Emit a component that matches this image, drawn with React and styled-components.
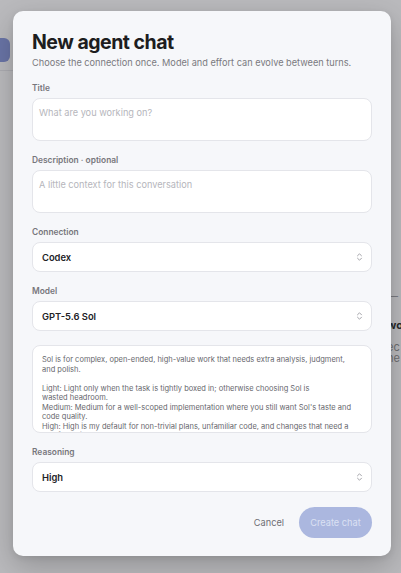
import React from "react";
import styled, { createGlobalStyle } from "styled-components";

const Global = createGlobalStyle`
  html, body { margin: 0; padding: 0; }
  body {
    width: 401px; height: 573px; overflow: hidden;
    font-family: Inter, "Noto Sans", sans-serif;
    background: #f3f3f5;
    -webkit-font-smoothing: antialiased;
  }
  * { box-sizing: border-box; }
`;

const Page = styled.div`
  position: relative;
  width: 401px;
  height: 573px;
  overflow: hidden;
  display: flex;
  background: #f6f6f8;
`;

const SideRail = styled.div`
  width: 40px;
  padding-top: 38px;
  border-bottom: 1px solid #e2e2e6;
  height: 71px;
`;

const RailPill = styled.div`
  width: 30px;
  height: 24px;
  margin-left: -20px;
  border-radius: 6px;
  background: #7f8fd6;
`;

const MainArea = styled.div`
  flex: 1;
  display: flex;
  flex-direction: column;
  align-items: flex-end;
  padding-top: 291px;
`;

const Peek = styled.div`
  width: 14px;
  font-size: 11px;
  line-height: 11px;
  color: ${(p) => p.$color};
  font-weight: ${(p) => p.$weight || 400};
  white-space: nowrap;
  overflow: hidden;
  margin-top: ${(p) => p.$mt || 0}px;
`;

const Overlay = styled.div`
  position: absolute;
  inset: 0;
  background: rgba(60, 60, 64, 0.32);
  display: flex;
  padding: 11px 10px 17px 13px;
`;

const Modal = styled.div`
  width: 378px;
  height: 545px;
  background: #f6f7fa;
  border-radius: 10px;
  box-shadow: 0 10px 30px rgba(0, 0, 0, 0.22), 0 2px 6px rgba(0, 0, 0, 0.08);
  padding: 18px 19px 19px;
  display: flex;
  flex-direction: column;
`;

const Heading = styled.h1`
  margin: 0;
  font-size: 19.5px;
  line-height: 26px;
  font-weight: 700;
  color: #1d1d20;
  letter-spacing: -0.5px;
`;

const Subtitle = styled.p`
  margin: 2px 0 0;
  font-size: 9.2px;
  line-height: 12px;
  color: #7a7a80;
  white-space: nowrap;
`;

const Form = styled.div`
  margin-top: 14px;
  display: flex;
  flex-direction: column;
  gap: 14px;
`;

const Field = styled.div`
  display: flex;
  flex-direction: column;
  gap: 5px;
`;

const Label = styled.div`
  font-size: 8.4px;
  line-height: 10px;
  font-weight: 600;
  color: #76767c;
`;

const TextBox = styled.div`
  height: 43px;
  background: #fff;
  border: 1px solid #e4e5ea;
  border-radius: 8px;
  padding: 7px 6px;
  font-size: 9.2px;
  line-height: 13px;
  color: #b6b6bc;
`;

const Select = styled.div`
  height: 30px;
  background: #fff;
  border: 1px solid #e4e5ea;
  border-radius: 8px;
  padding: 0 8px 0 9px;
  display: flex;
  align-items: center;
  justify-content: space-between;
  font-size: 9.4px;
  font-weight: 600;
  color: #222226;
`;

const Info = styled.div`
  height: 88px;
  overflow: hidden;
  background: #fff;
  border: 1px solid #e4e5ea;
  border-radius: 8px;
  padding: 9px 9px;
  font-size: 7.5px;
  line-height: 9.5px;
  color: #66666c;
  white-space: pre;
`;

const Footer = styled.div`
  margin-top: 15px;
  display: flex;
  justify-content: flex-end;
  align-items: center;
  gap: 15px;
`;

const CancelButton = styled.button`
  border: 0;
  background: transparent;
  font-family: inherit;
  font-size: 9.2px;
  color: #6e6e74;
  padding: 0;
`;

const PrimaryButton = styled.button`
  border: 0;
  width: 73px;
  height: 31px;
  border-radius: 16px;
  background: #abb7df;
  color: #dbe1f3;
  font-family: inherit;
  font-size: 9.2px;
  padding: 0;
`;

const Chevrons = () => (
  <svg width="7" height="10" viewBox="0 0 7 10" fill="none" stroke="#a3a3a9" strokeWidth="1" strokeLinecap="round" strokeLinejoin="round">
    <path d="M1.5 3.8 L3.5 1.8 L5.5 3.8" />
    <path d="M1.5 6.2 L3.5 8.2 L5.5 6.2" />
  </svg>
);

const infoText = `Sol is for complex, open-ended, high-value work that needs extra analysis, judgment,
and polish.

Light: Light only when the task is tightly boxed in; otherwise choosing Sol is
wasted headroom.
Medium: Medium for a well-scoped implementation where you still want Sol's taste and
code quality.
High: High is my default for non-trivial plans, unfamiliar code, and changes that need a
careful review loop.`;

export default function App() {
  return (
    <>
      <Global />
      <Page>
        <SideRail>
          <RailPill />
        </SideRail>
        <MainArea>
          <Peek $color="#9a9aa0">—</Peek>
          <Peek $color="#222" $weight={700} $mt={18}>wo</Peek>
          <Peek $color="#888" $mt={11}>ec</Peek>
          <Peek $color="#888">ne</Peek>
        </MainArea>
        <Overlay>
          <Modal>
            <Heading>New agent chat</Heading>
            <Subtitle>Choose the connection once. Model and effort can evolve between turns.</Subtitle>
            <Form>
              <Field>
                <Label>Title</Label>
                <TextBox>What are you working on?</TextBox>
              </Field>
              <Field>
                <Label>Description · optional</Label>
                <TextBox>A little context for this conversation</TextBox>
              </Field>
              <Field>
                <Label>Connection</Label>
                <Select>
                  <span>Codex</span>
                  <Chevrons />
                </Select>
              </Field>
              <Field>
                <Label>Model</Label>
                <Select>
                  <span>GPT-5.6 Sol</span>
                  <Chevrons />
                </Select>
              </Field>
              <Info>{infoText}</Info>
              <Field>
                <Label>Reasoning</Label>
                <Select>
                  <span>High</span>
                  <Chevrons />
                </Select>
              </Field>
            </Form>
            <Footer>
              <CancelButton>Cancel</CancelButton>
              <PrimaryButton>Create chat</PrimaryButton>
            </Footer>
          </Modal>
        </Overlay>
      </Page>
    </>
  );
}
